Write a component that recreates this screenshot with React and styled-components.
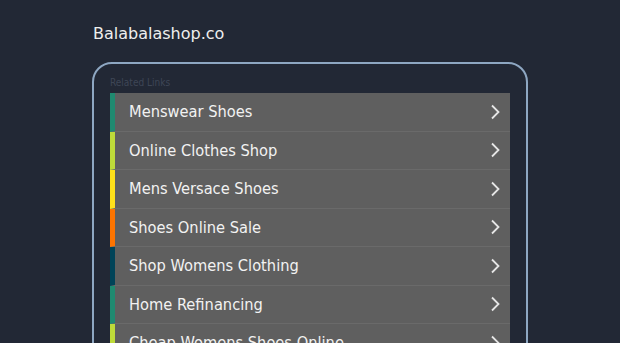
import React from 'react';
import styled, { createGlobalStyle } from 'styled-components';

const GlobalStyle = createGlobalStyle`
  html, body {
    margin: 0;
    padding: 0;
    background: #222835;
    font-family: 'DejaVu Sans', 'Liberation Sans', sans-serif;
  }
`;

const links = [
  { label: 'Menswear Shoes', color: '#1f8a70' },
  { label: 'Online Clothes Shop', color: '#bedb39' },
  { label: 'Mens Versace Shoes', color: '#ffe11a' },
  { label: 'Shoes Online Sale', color: '#fd7400' },
  { label: 'Shop Womens Clothing', color: '#004358' },
  { label: 'Home Refinancing', color: '#1f8a70' },
  { label: 'Cheap Womens Shoes Online', color: '#bedb39' },
];

const Chevron = () => (
  <svg width="10" height="16" viewBox="0 0 10 16" fill="none">
    <path d="M2 1.5 L8.5 8 L2 14.5" stroke="#e6e6e6" strokeWidth="1.8" />
  </svg>
);

const App = () => {
  return (
    <>
      <GlobalStyle />
      <Page>
        <SiteName>Balabalashop.co</SiteName>
        <Panel>
          <PanelLabel>Related Links</PanelLabel>
          <LinkList>
            {links.map((link) => (
              <LinkRow key={link.label} $accent={link.color}>
                <LinkText>{link.label}</LinkText>
                <Chevron />
              </LinkRow>
            ))}
          </LinkList>
        </Panel>
      </Page>
    </>
  );
};

const Page = styled.div`
  height: 343px;
  overflow: hidden;
  padding: 23px 0 0 93px;
  box-sizing: border-box;
`;

const SiteName = styled.h1`
  margin: 0;
  font-size: 16px;
  font-weight: normal;
  color: #eeeeee;
  line-height: 22px;
`;

const Panel = styled.div`
  width: 436px;
  margin: 17px 0 0 -1px;
  box-sizing: border-box;
  border: 2px solid #8ea7c2;
  border-radius: 20px;
  padding: 12px 16px 0 16px;
  height: 400px;
`;

const PanelLabel = styled.div`
  font-size: 10px;
  font-family: 'DejaVu Sans Condensed', 'DejaVu Sans', sans-serif;
  font-stretch: condensed;
  color: #3e4656;
  line-height: 13px;
  margin-bottom: 4px;
`;

const LinkList = styled.div`
  display: flex;
  flex-direction: column;
  width: 400px;
`;

const LinkRow = styled.div`
  display: flex;
  align-items: center;
  justify-content: space-between;
  height: 37.5px;
  background: #5f5f5f;
  border-left: 5px solid ${(p) => p.$accent};
  border-bottom: 1px solid #6a6a6a;
  padding: 0 10px 0 14px;
`;

const LinkText = styled.span`
  font-family: 'DejaVu Sans Condensed', 'DejaVu Sans', sans-serif;
  font-stretch: condensed;
  font-size: 16.3px;
  color: #f2f2f2;
`;

export default App;
